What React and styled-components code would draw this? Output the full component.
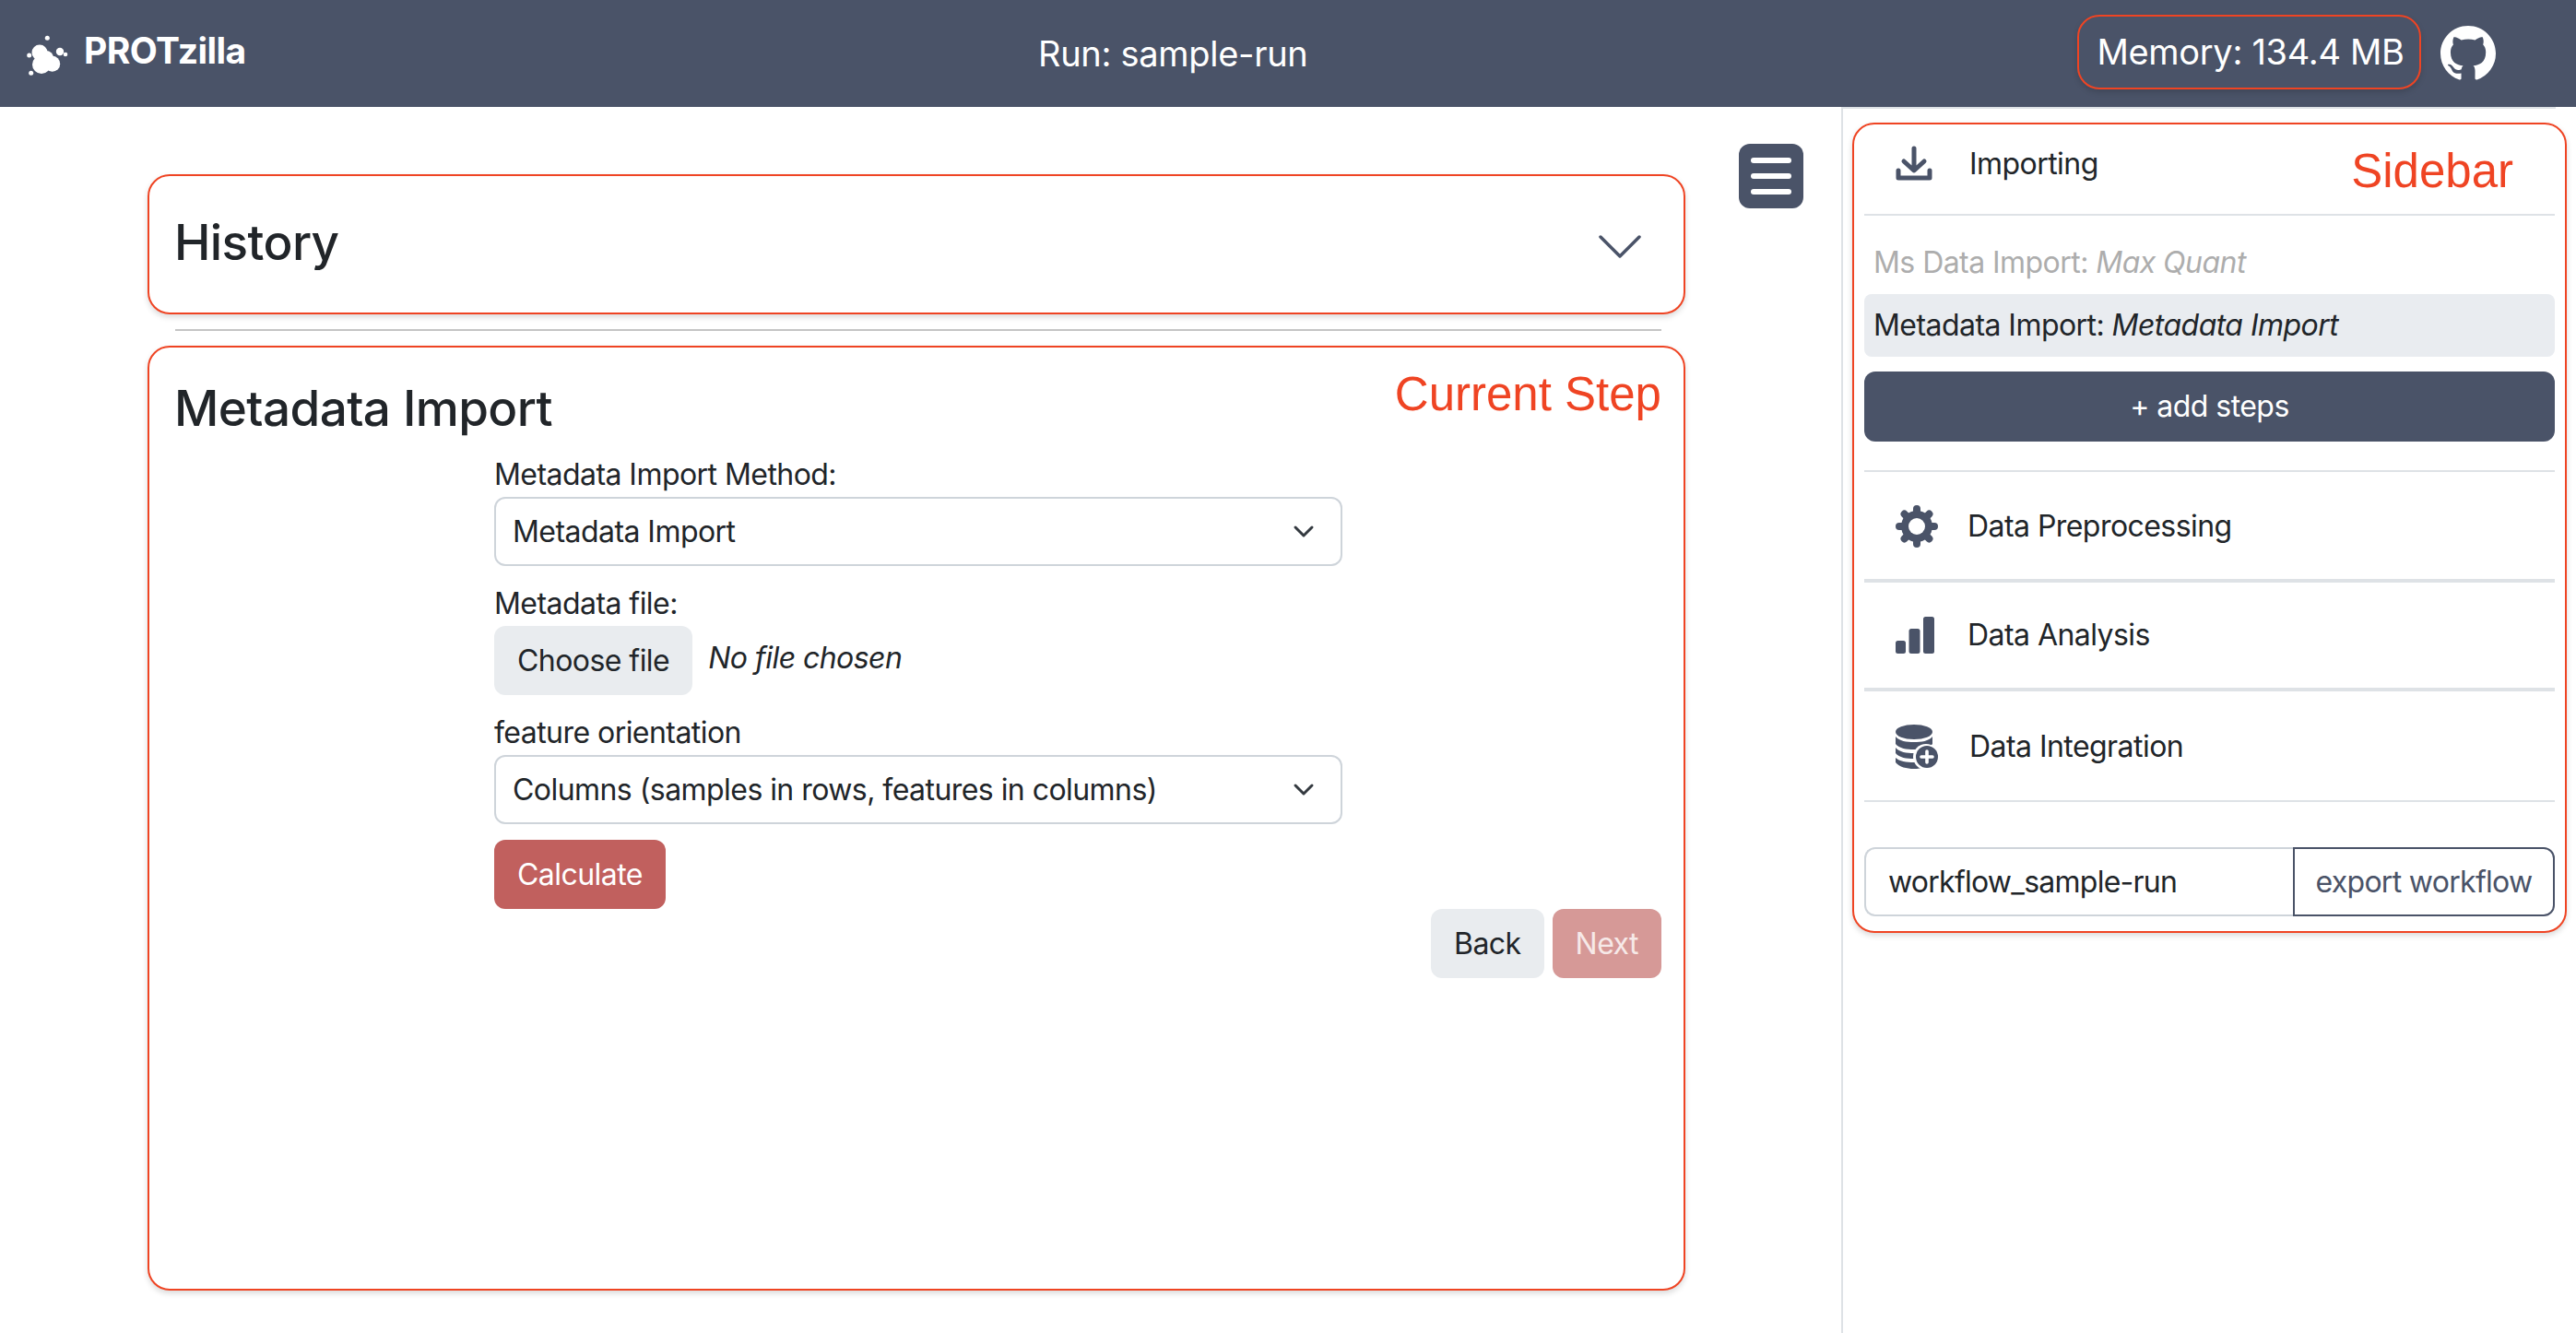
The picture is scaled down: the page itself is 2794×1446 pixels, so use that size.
import React from 'react';
import styled, { createGlobalStyle } from 'styled-components';
import { BsGithub } from 'react-icons/bs';

const NAVY = '#4a5368';
const RED = '#ef4423';

const GlobalStyle = createGlobalStyle`
  * { box-sizing: border-box; }
  body {
    margin: 0;
    background: white;
    color: #212529;
    font-family: Inter, "Liberation Sans", sans-serif;
    font-size: 32px;
    line-height: 48px;
    letter-spacing: -0.55px;
  }
`;

const Logo = () => (
  <svg width="46" height="48" viewBox="0 0 46 48" fill="white">
    <circle cx="15" cy="23" r="8.5" />
    <circle cx="17" cy="36" r="10" />
    <circle cx="28.7" cy="35.3" r="8.5" />
    <circle cx="22" cy="29" r="8" />
    <circle cx="37" cy="22" r="4.2" />
    <circle cx="43" cy="25" r="2.3" />
    <circle cx="23.3" cy="7.3" r="2.5" />
    <circle cx="3.7" cy="26" r="2.5" />
    <circle cx="5.7" cy="45.3" r="2.5" />
  </svg>
);

const DownloadIcon = () => (
  <svg width="40" height="40" viewBox="0 0 40 40" fill="none" stroke={NAVY} strokeWidth="5" strokeLinecap="round" strokeLinejoin="round">
    <path d="M20 3v22M9 17l11 10 11-10" />
    <path d="M3 27v8h34v-8" />
  </svg>
);

const GearIcon = () => (
  <svg width="46" height="46" viewBox="0 0 46 46">
    <circle cx="23" cy="23" r="17" fill={NAVY} />
    {[0, 45, 90, 135, 180, 225, 270, 315].map((deg) => (
      <line
        key={deg}
        x1="23"
        y1="23"
        x2="23"
        y2="4"
        stroke={NAVY}
        strokeWidth="8"
        strokeLinecap="round"
        transform={`rotate(${deg} 23 23)`}
      />
    ))}
    <circle cx="23" cy="23" r="9" fill="white" />
  </svg>
);

const BarsIcon = () => (
  <svg width="42" height="40" viewBox="0 0 42 40" fill={NAVY}>
    <rect x="0" y="26" width="11" height="14" rx="2.5" />
    <rect x="14.5" y="13" width="12" height="27" rx="2.5" />
    <rect x="30" y="0" width="12" height="40" rx="2.5" />
  </svg>
);

const DatabaseIcon = () => (
  <svg width="46" height="48" viewBox="0 0 46 48" fill={NAVY}>
    <ellipse cx="20" cy="8" rx="20" ry="8" />
    <path d="M0 13c4 5 12 6 20 6s16-1 20-6v8c-4 5-12 6-20 6S4 26 0 21z" />
    <path d="M0 25c4 5 12 6 20 6s16-1 20-6v6c-4 5-12 6-20 6S4 36 0 31z" />
    <path d="M0 36c4 4 12 5 20 5s16-1 20-5v5c-4 5-12 7-20 7S4 46 0 41z" />
    <circle cx="33" cy="35" r="14" fill="white" />
    <circle cx="34" cy="35" r="12" />
    <path d="M34 29v12M28 35h12" stroke="white" strokeWidth="3.6" strokeLinecap="round" />
  </svg>
);

const SelectChevron = () => (
  <svg width="24" height="16" viewBox="0 0 24 16" fill="none" stroke="#343a40" strokeWidth="3" strokeLinecap="round" strokeLinejoin="round">
    <path d="M3 3l9 9 9-9" />
  </svg>
);

const App = () => (
  <>
    <GlobalStyle />
    <Navbar>
      <Brand>
        <Logo />
        <BrandName>PROTzilla</BrandName>
      </Brand>
      <RunTitle>Run: sample-run</RunTitle>
      <Memory>Memory: 134.4 MB</Memory>
      <GithubLink>
        <BsGithub size={60} color="white" />
      </GithubLink>
    </Navbar>
    <Main>
      <Content>
        <Cards>
          <HistoryCard>
            <Heading>History</Heading>
            <svg width="46" height="26" viewBox="0 0 46 26" fill="none" stroke={NAVY} strokeWidth="3.5" strokeLinecap="round" strokeLinejoin="round">
              <path d="M2 2l21 21L44 2" />
            </svg>
          </HistoryCard>
          <Rule />
          <StepCard>
            <Annotation $top={20} $right={24}>Current Step</Annotation>
            <StepHeading>Metadata Import</StepHeading>
            <Form>
              <Label>Metadata Import Method:</Label>
              <Select>
                Metadata Import
                <SelectChevron />
              </Select>
              <Label $gap>Metadata file:</Label>
              <FileRow>
                <GrayButton>Choose file</GrayButton>
                <FileName>No file chosen</FileName>
              </FileRow>
              <Label $gap>feature orientation</Label>
              <Select>
                Columns (samples in rows, features in columns)
                <SelectChevron />
              </Select>
              <CalculateButton>Calculate</CalculateButton>
            </Form>
            <Footer>
              <GrayButton>Back</GrayButton>
              <NextButton>Next</NextButton>
            </Footer>
          </StepCard>
        </Cards>
        <MenuButton>
          <MenuBar />
          <MenuBar />
          <MenuBar />
        </MenuButton>
      </Content>
      <Sidebar>
        <TopRule />
        <SidebarCard>
          <Annotation $top={20} $right={56}>Sidebar</Annotation>
          <Section $height={97} $lift={11}>
            <IconSlot $wide><DownloadIcon /></IconSlot>
            Importing
          </Section>
          <Divider $size={2} />
          <Steps>
            <StepItem $done>Ms Data Import: <em>Max Quant</em></StepItem>
            <StepItem $active>Metadata Import: <em>Metadata Import</em></StepItem>
            <AddSteps>+ add steps</AddSteps>
          </Steps>
          <Divider $size={2} />
          <Section $height={116} $drop={2}>
            <IconSlot><GearIcon /></IconSlot>
            Data Preprocessing
          </Section>
          <Divider $size={4} />
          <Section $height={114}>
            <IconSlot><BarsIcon /></IconSlot>
            Data Analysis
          </Section>
          <Divider $size={4} />
          <Section $height={118} $drop={2}>
            <IconSlot $wide><DatabaseIcon /></IconSlot>
            Data Integration
          </Section>
          <Divider $size={2} />
          <ExportRow>
            <WorkflowInput defaultValue="workflow_sample-run" />
            <ExportButton>export workflow</ExportButton>
          </ExportRow>
        </SidebarCard>
      </Sidebar>
    </Main>
  </>
);

const Navbar = styled.header`
  height: 116px;
  background: ${NAVY};
  color: white;
  display: flex;
  align-items: center;
`;

const Brand = styled.div`
  width: 1126px;
  padding: 0 0 0 28px;
  display: flex;
  align-items: center;
  gap: 17px;
`;

const BrandName = styled.span`
  font-size: 39px;
  font-weight: 700;
  margin-top: -6px;
`;

const RunTitle = styled.div`
  font-size: 38px;
  letter-spacing: -0.3px;
  margin-top: -1px;
`;

const Memory = styled.div`
  margin-left: auto;
  width: 373px;
  height: 81px;
  margin-top: -3px;
  padding: 0 0 2px 3px;
  border: 2px solid ${RED};
  border-radius: 24px;
  box-shadow: 0 3px 6px rgba(0, 0, 0, 0.15);
  display: flex;
  align-items: center;
  justify-content: center;
  font-size: 38px;
  letter-spacing: -0.3px;
`;

const GithubLink = styled.a`
  display: flex;
  margin: 0 87px 0 21px;
`;

const Main = styled.main`
  display: flex;
  min-height: 1330px;
`;

const Content = styled.div`
  width: 1999px;
  padding-left: 160px;
  border-right: 2px solid #dee2e6;
  display: flex;
  align-items: flex-start;
  gap: 58px;
`;

const Cards = styled.div`
  width: 1668px;
  padding-top: 73px;
`;

const Card = styled.section`
  position: relative;
  border: 2px solid ${RED};
  border-radius: 24px;
  box-shadow: 0 3px 6px rgba(0, 0, 0, 0.15);
  background: white;
`;

const HistoryCard = styled(Card)`
  height: 152px;
  padding: 0 46px 4px 27px;
  display: flex;
  align-items: center;
  justify-content: space-between;

  svg {
    margin-top: 10px;
  }
`;

const Heading = styled.h2`
  margin: 0;
  font-size: 53px;
  line-height: 68px;
  font-weight: 550;
  letter-spacing: -0.6px;
`;

const Rule = styled.div`
  height: 2px;
  margin: 16px 26px 16px 30px;
  background: #c4c4c4;
`;

const StepCard = styled(Card)`
  height: 1025px;
  padding: 32px 24px 0 27px;
`;

const StepHeading = styled(Heading)`
  margin-bottom: 14px;
`;

const Annotation = styled.div`
  position: absolute;
  top: ${({ $top }) => $top}px;
  right: ${({ $right }) => $right}px;
  color: ${RED};
  font-family: "Liberation Sans", Arial, sans-serif;
  font-size: 51px;
  line-height: 62px;
  letter-spacing: 0;
`;

const Form = styled.div`
  width: 920px;
  margin-left: 347px;
`;

const Label = styled.div`
  margin-top: ${({ $gap }) => ($gap ? 17 : 0)}px;
`;

const Select = styled.div`
  height: 75px;
  padding: 0 28px 0 18px;
  border: 2px solid #ced4da;
  border-radius: 12px;
  display: flex;
  align-items: center;
  justify-content: space-between;
`;

const FileRow = styled.div`
  display: flex;
  align-items: flex-start;
  gap: 17px;
`;

const FileName = styled.em`
  margin-top: 11px;
`;

const Button = styled.button`
  height: 75px;
  padding: 0 25px;
  border: none;
  border-radius: 12px;
  font: inherit;
  letter-spacing: inherit;
`;

const GrayButton = styled(Button)`
  background: #e9ecef;
  color: #212529;
`;

const CalculateButton = styled(Button)`
  display: block;
  margin-top: 17px;
  background: #c1605e;
  color: white;
`;

const Footer = styled.div`
  display: flex;
  justify-content: flex-end;
  gap: 9px;
`;

const NextButton = styled(Button)`
  background: #d69997;
  color: #f6e9e8;
`;

const MenuButton = styled.button`
  width: 70px;
  height: 70px;
  margin-top: 40px;
  border: none;
  border-radius: 12px;
  background: ${NAVY};
  display: flex;
  flex-direction: column;
  align-items: center;
  justify-content: center;
  gap: 11px;
`;

const MenuBar = styled.span`
  width: 44px;
  height: 6px;
  border-radius: 3px;
  background: white;
`;

const Sidebar = styled.aside`
  flex: 1;
`;

const TopRule = styled.div`
  width: 773px;
  height: 2px;
  background: #dee2e6;
`;

const SidebarCard = styled(Card)`
  width: 775px;
  height: 879px;
  margin: 15px 0 0 10px;
  padding: 0 11px;
`;

const Section = styled.div`
  height: ${({ $height }) => $height}px;
  padding: ${({ $drop = 0 }) => $drop}px 0 ${({ $lift = 0 }) => $lift}px 34px;
  display: flex;
  align-items: center;
`;

const IconSlot = styled.span`
  width: ${({ $wide }) => ($wide ? 80 : 78)}px;
  display: flex;
  align-items: center;
`;

const Divider = styled.div`
  height: ${({ $size }) => $size}px;
  background: #dee2e6;
`;

const Steps = styled.div`
  padding-top: 17px;
  height: 276px;
`;

const StepItem = styled.div`
  height: 68px;
  margin-bottom: ${({ $done }) => ($done ? 0 : 16)}px;
  padding: 0 10px;
  display: flex;
  align-items: center;
  border-radius: 8px;
  white-space: pre;
  color: ${({ $done }) => ($done ? '#adadad' : '#212529')};
  background: ${({ $active }) => ($active ? '#e9ecf0' : 'transparent')};
`;

const AddSteps = styled(Button)`
  width: 100%;
  height: 76px;
  background: ${NAVY};
  color: white;
`;

const ExportRow = styled.div`
  margin-top: 49px;
  height: 75px;
  display: flex;
`;

const WorkflowInput = styled.input`
  flex: 1;
  min-width: 0;
  padding: 0 24px;
  border: 2px solid #ced4da;
  border-right: none;
  border-radius: 12px 0 0 12px;
  font: inherit;
  letter-spacing: -0.75px;
  color: #212529;
`;

const ExportButton = styled.button`
  width: 284px;
  border: 2px solid ${NAVY};
  border-radius: 0 12px 12px 0;
  background: white;
  color: ${NAVY};
  font: inherit;
  letter-spacing: -0.7px;
`;

export default App;
